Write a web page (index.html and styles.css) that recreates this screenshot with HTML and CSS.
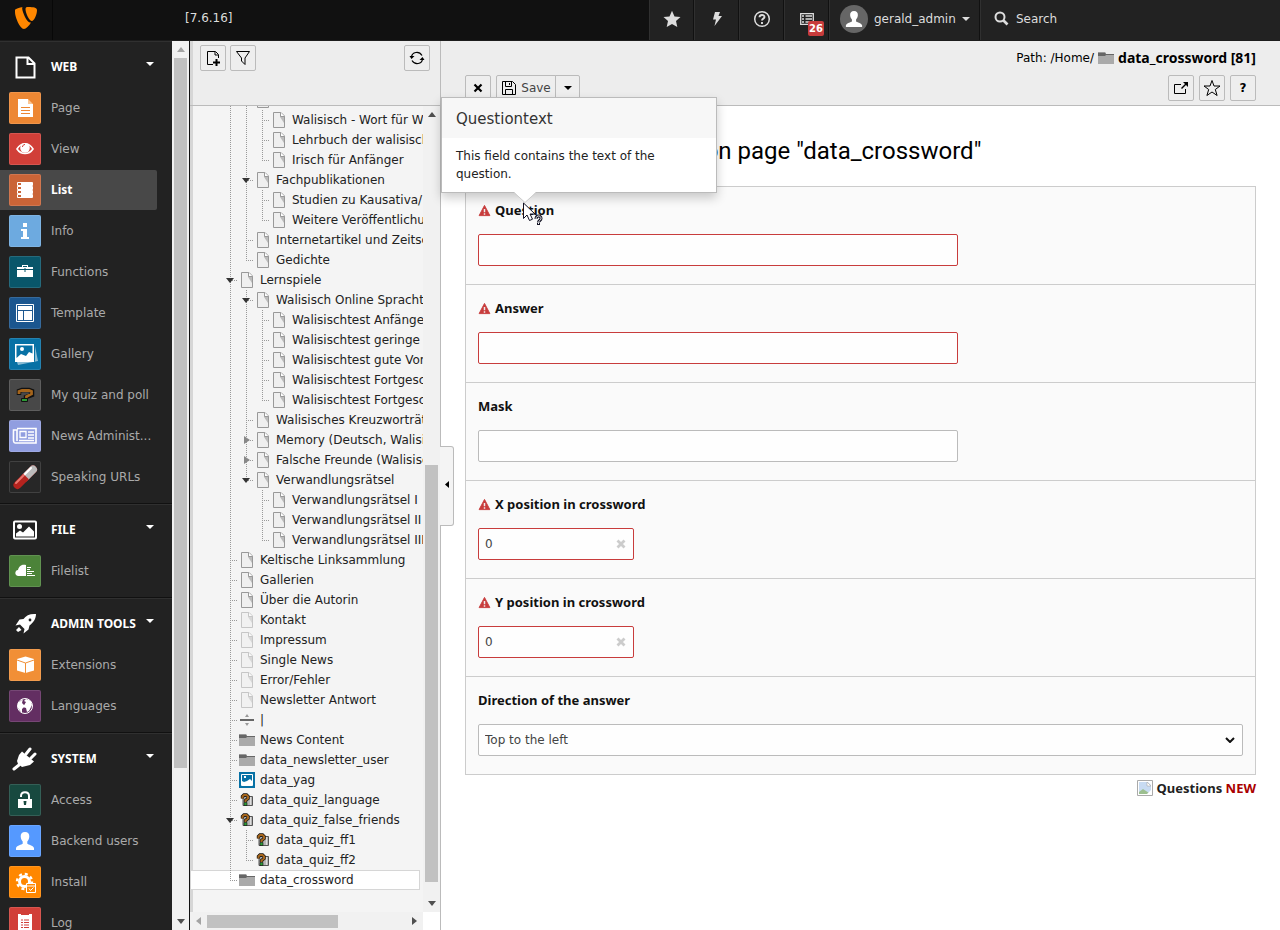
FILE: index.html
```html
<!DOCTYPE html>
<html lang="en">
<head>
<meta charset="utf-8">
<title>TYPO3 CMS [7.6.16]</title>
<link rel="stylesheet" href="styles.css">
</head>
<body>
<svg class="defs" aria-hidden="true">
  <symbol id="page" viewBox="0 0 16 16"><path d="M2.500.5h7.500l3.500 3.500v11.500h-11z" fill="#efefef" stroke="#999"/><path d="M9 4v1l4 6V5z" fill="#bbb"/><path d="M9.500.500v4h4" fill="#fff" stroke="#999"/></symbol>
  <symbol id="folder" viewBox="0 0 16 16"><path d="M0 3h7v1h9v10H0z" fill="#aaa"/><path d="M0 2h7l1 2h8v1H8L7 6H0z" fill="#666"/><path d="M0 2h7v1H0z" fill="#999"/></symbol>
  <symbol id="quiz" viewBox="0 0 16 16"><path d="M4 4.500h9.500v9H4z" fill="#b5b5b5" stroke="#555"/><path d="M11.500 5v8" stroke="#ddd"/><path d="M3.500 6.500V4.500l1.500-1.500h2.500L9 4.500v2L6.500 8.500V10" fill="none" stroke="#111" stroke-width="3.400"/><path d="M3.500 6.500V4.500l1.500-1.500h2.500L9 4.500v2L6.500 8.500V10" fill="none" stroke="#a5651c" stroke-width="2"/><path d="M5 10.500h3v3H5z" fill="#2b9a35" stroke="#111" stroke-width=".6"/></symbol>
  <symbol id="warn" viewBox="0 0 14 14"><path d="M7 1.500l5.800 11H1.200z" fill="#c83c3c" stroke="#c83c3c" stroke-linejoin="round"/><path d="M6.200 5.500h1.600v3.500H6.200zm0 4.500h1.600v1.500H6.200z" fill="#eee"/></symbol>
  <symbol id="user" viewBox="0 0 20 20"><path d="M10 1c3 0 4.500 2 4.300 4.800-.2 2.500-1.300 4-2 4.700v2.200c1 1 5.700 1.300 6.700 4.300V19H1v-2c1-3 5.700-3.300 6.700-4.300v-2.200C7 9.800 5.900 8.300 5.700 5.800 5.500 3 7 1 10 1z" fill="#fff"/></symbol>
  <symbol id="caret" viewBox="0 0 8 4"><path d="M0 0h8L4 4z" fill="currentColor"/></symbol>
</svg>

<header class="topbar">
  <a class="logo" href="#" aria-label="TYPO3"><svg width="22" height="23" viewBox="0 0 22 23"><path d="M16 15.500c-.4.100-.6.100-1 .1C11.800 15.600 7.200 4.700 7.200 1.500 7.200.500 7.500 0 8 0 4 .5 1 1.600 0 2.800-.2 3.200-.1 3.700 0 5c0 5 5 17 9 17 2 0 5-3 7-6.500zM13.700 0c4.300 0 8.300.6 8.300 3 0 5.200-3.300 11-5 11-3 0-6.500-8-6.500-12 0-1.700 1-2 3.200-2z" fill="#ff8700"/></svg></a>
  <span class="version">[7.6.16]</span>
  <nav class="tools">
    <button class="tool" aria-label="Bookmarks"><svg width="18" height="18" viewBox="0 0 18 18"><path d="M9 .8l2.500 5.600 6 .6-4.500 4 1.300 6L9 13.900 3.700 17 5 11 .5 7l6-.6z" fill="#ddd"/></svg></button>
    <button class="tool" aria-label="Clear cache"><svg width="12" height="16" viewBox="0 0 12 16"><path d="M4 1h5L7.500 5H11L3.500 15 5 8.500H2z" fill="#ddd"/></svg></button>
    <button class="tool" aria-label="Help"><svg width="18" height="18" viewBox="0 0 18 18" fill="none" stroke="#ddd"><circle cx="9" cy="9" r="7.300" stroke-width="1.500"/><path d="M6.500 7.300C6.500 4.200 11.500 4.200 11.500 7 11.500 8.700 9 8.600 9 10.500M9 12v2" stroke-width="1.900"/></svg></button>
    <button class="tool" aria-label="System information"><svg width="16" height="14" viewBox="0 0 16 14"><path d="M1.700 1.700h12.600v10.600H1.700z" fill="none" stroke="#ddd" stroke-width="1.300"/><path d="M3 4h2M6.500 4h6.500M3 7h2M6.500 7h6.500M3 10h2M6.500 10h6.500" stroke="#ddd" stroke-width="1.400"/></svg><span class="count">26</span></button>
    <button class="tool account"><span class="avatar"><svg width="18" height="18"><use href="#user"/></svg></span>gerald_admin<svg class="down" width="8" height="4"><use href="#caret"/></svg></button>
    <button class="tool search"><svg width="15" height="15" viewBox="0 0 15 15" fill="none" stroke="#ddd"><circle cx="6" cy="6" r="4.500" stroke-width="2"/><path d="M9.500 9.500l4 4" stroke-width="2.600"/></svg>Search</button>
  </nav>
</header>

<main class="workspace">
  <nav class="modules">
    <div class="modlist">
      <section class="group">
        <button class="head"><svg width="32" height="32" viewBox="0 0 32 32"><path d="M7.500 6.500h12l6 6v14h-18zM18.500 7v6h6" fill="none" stroke="#fff" stroke-width="2"/></svg>WEB<svg class="down" width="8" height="4"><use href="#caret"/></svg></button>
        <a class="mod" href="#"><span class="tile orange"><svg viewBox="0 0 32 32"><path d="M9 7h10v5h5v13H9z" fill="#fff"/><path d="M19 7l5 5h-5z" fill="#fbc693"/><path d="M12 15.500h9M12 18.500h9M12 21.500h9" stroke="#ed8733"/></svg></span>Page</a>
        <a class="mod" href="#"><span class="tile red"><svg viewBox="0 0 32 32"><path d="M8 16c4-7 12-7 16 0-4 6-12 6-16 0z" fill="none" stroke="#fff" stroke-width="1.600"/><circle cx="16" cy="15" r="4.800" fill="#fff"/><path d="M13.500 14c0-1.500 1-2.500 2.500-2.500" fill="none" stroke="#d13f38"/></svg></span>View</a>
        <a class="mod active" href="#"><span class="tile rust"><svg viewBox="0 0 32 32" fill="none" stroke="#fff"><path d="M8.500 8.500h15v3h-15zM8.500 12.500h15v3h-15zM8.500 16.500h15v3h-15zM8.500 20.500h15v3h-15z"/><path d="M12 10h11M12 14h11M12 18h11M12 22h11" stroke-width="2"/></svg></span>List</a>
        <a class="mod" href="#"><span class="tile sky"><svg viewBox="0 0 32 32"><path d="M14 8h4v4h-4zM12 14h6v8h2v2h-8v-2h2v-6h-2z" fill="#fff"/></svg></span>Info</a>
        <a class="mod" href="#"><span class="tile teal"><svg viewBox="0 0 32 32"><path d="M8 11h5V9h6v2h5v10H8z" fill="#fff"/><path d="M14 10.500h4M8 13.500h16M16 12v4" stroke="#09566a"/></svg></span>Functions</a>
        <a class="mod" href="#"><span class="tile blue"><svg viewBox="0 0 32 32"><path d="M7.500 7.500h17v17h-17z" fill="none" stroke="#fff"/><path d="M9 9h14v4H9zM9 14h5v9H9zM15 14h8v9h-8z" fill="#fff"/></svg></span>Template</a>
        <a class="mod" href="#"><span class="tile azure"><svg viewBox="0 0 32 32"><path d="M26 8l3 15-20 4-1-3h18z" fill="#8bbdd5"/><path d="M6 6h19v18H6z" fill="#fff"/><path d="M7.500 7.500h16v8L20 14l-3 4-5-2-4.500 4z" fill="#0771a5"/><circle cx="13" cy="11" r="2" fill="#fff"/></svg></span>Gallery</a>
        <a class="mod" href="#"><span class="tile grey"><svg viewBox="0 0 32 32"><path d="M10 16v-4l3-1h7l3 1v4l-6 2v2" fill="none" stroke="#111" stroke-width="4.500"/><path d="M10 15v-2.500l3-1h7l2.500 1v2.500l-5 2.500v1.500" fill="none" stroke="#a5651c" stroke-width="2.800"/><path d="M12.500 19.500h6v3h-6z" fill="#2b9a35" stroke="#111"/></svg></span>My quiz and poll</a>
        <a class="mod" href="#"><span class="tile lilac"><svg viewBox="0 0 32 32" fill="none" stroke="#fff"><path d="M8 8.500h19v14.500H6C4 23 4.500 20 4.500 10H8v11" stroke-width="1.600"/><path d="M11 11.500h6v6h-6zM19 12h6M19 15h6M19 18h6M10 20.500h15" stroke-width="1.300"/></svg></span>News Administ...</a>
        <a class="mod" href="#"><span class="tile dark"><svg viewBox="0 0 32 32"><path d="M8.500 24L24 8.500" stroke="#b5231e" stroke-width="8" stroke-linecap="round"/><path d="M17 15.500l7-7" stroke="#bbb" stroke-width="8" stroke-linecap="round"/><path d="M14 18.500l3-3" stroke="#b5231e" stroke-width="8"/><path d="M7 22l8-8" stroke="#ea7770" stroke-width="2" stroke-linecap="round"/><path d="M16 13l6-6" stroke="#fff" stroke-width="2" stroke-linecap="round"/></svg></span>Speaking URLs</a>
      </section>
      <section class="group">
        <button class="head"><svg width="32" height="32" viewBox="0 0 32 32"><rect x="5" y="7.500" width="22" height="17" rx="1" fill="none" stroke="#fff" stroke-width="2"/><circle cx="10.500" cy="12.500" r="2.500" fill="#fff"/><path d="M7 22.500v-3l4-3 3 2 6-6 5 5v5z" fill="#fff"/></svg>FILE<svg class="down" width="8" height="4"><use href="#caret"/></svg></button>
        <a class="mod" href="#"><span class="tile green"><svg viewBox="0 0 32 32"><path d="M17 21H9c-4-1-3-6 0-6 1-5 5-6 8-5z" fill="#fff"/><path d="M18 12.500h4M18 14.500h3M18 16.500h7M18 18.500h5M18 20.500h8" stroke="#fff"/></svg></span>Filelist</a>
      </section>
      <section class="group">
        <button class="head"><svg width="32" height="32" viewBox="0 0 32 32"><path d="M27 6c-6-.5-10 1.500-12.500 5l-4 .5-4 6 4.500-1 4.500 4.500-1 4.500 5-4 1-4C24 15 27 11 27 6zM7 22l3-3 2.500 3L9 24z" fill="#fff"/><circle cx="21" cy="12" r="1.400" fill="#222"/></svg>ADMIN TOOLS<svg class="down" width="8" height="4"><use href="#caret"/></svg></button>
        <a class="mod" href="#"><span class="tile amber"><svg viewBox="0 0 32 32"><path d="M8 10l8.500-2.500L25 10v11.500L16.500 24 8 21.500z" fill="#fff"/><path d="M8 11l8.500 3L25 11M16.500 14v10" fill="none" stroke="#f18f36"/></svg></span>Extensions</a>
        <a class="mod" href="#"><span class="tile purple"><svg viewBox="0 0 32 32"><circle cx="16" cy="16" r="7.500" fill="none" stroke="#fff"/><path d="M9 13l5-4-1 4 3 3-3 3v4l-4-5zM17 9l5 2 1 4-3 6-2 1-1-4-3-1 3-5-2-1z" fill="#fff"/></svg></span>Languages</a>
      </section>
      <section class="group">
        <button class="head"><svg width="32" height="32" viewBox="0 0 32 32"><path d="M5 26l5-4M17 11l4-5M22 15l4-4" stroke="#fff" stroke-width="3" stroke-linecap="round"/><path d="M13 8.500l12 10-4 3.500-8 2-4-3-1-3 2-6z" fill="#fff"/></svg>SYSTEM<svg class="down" width="8" height="4"><use href="#caret"/></svg></button>
        <a class="mod" href="#"><span class="tile forest"><svg viewBox="0 0 32 32"><path d="M9 15h14v9H9z" fill="#fff"/><path d="M12 13v-1c0-5 8-5 8 0v3" fill="none" stroke="#fff" stroke-width="2"/><path d="M14.500 17h3l-.5 4h-2z" fill="#18493f"/></svg></span>Access</a>
        <a class="mod" href="#"><span class="tile bright"><svg viewBox="-6 -6 32 32"><use href="#user" width="20" height="20"/></svg></span>Backend users</a>
        <a class="mod" href="#"><span class="tile vivid"><svg viewBox="0 0 32 32"><circle cx="15.500" cy="15.500" r="5" fill="none" stroke="#fff" stroke-width="3"/><circle cx="15.500" cy="15.500" r="7.500" fill="none" stroke="#fff" stroke-width="2.400" stroke-dasharray="3 2.900"/><path d="M17.500 17.500h9v9h-9z" fill="#ff8700" stroke="#fff"/><path d="M18 20h8M20 22.500l1.500 2 3-3" fill="none" stroke="#fff"/></svg></span>Install</a>
        <a class="mod" href="#"><span class="tile red"><svg viewBox="0 0 32 32"><path d="M9 7h14v18H9z" fill="#fff"/><path d="M12 7.500h8M12 13h2M15 13h5M12 15.500h2M15 15.500h5M12 18h2M15 18h5M12 20.500h2M15 20.500h5" stroke="#d13f38"/></svg></span>Log</a>
      </section>
    </div>
    <div class="vbar modbar"><svg class="arr" width="8" height="5" viewBox="0 0 8 5"><path d="M0 5h8L4 0z" fill="#a3a3a3"/></svg><div class="track"><div class="thumb"></div></div><svg class="arr" width="8" height="5" viewBox="0 0 8 5"><path d="M0 0h8L4 5z" fill="#505050"/></svg></div>
  </nav>

  <aside class="pages">
    <div class="dochead treehead">
      <button class="btn" aria-label="New page"><svg width="18" height="18" viewBox="0 0 18 18"><path d="M9 15.500H3.500v-13h8l3 3V9M11 3v3h3" fill="none" stroke="#000"/><path d="M12.500 10v7M9 13.500h7" stroke="#000" stroke-width="2"/></svg></button>
      <button class="btn" aria-label="Filter"><svg width="18" height="18" viewBox="0 0 18 18"><path d="M2.500 2.500h13L11 9v6.500L7.500 12V9z" fill="none" stroke="#000"/></svg></button>
      <button class="btn end" aria-label="Refresh"><svg width="18" height="18" viewBox="0 0 18 18" fill="none" stroke="#000" stroke-width="1.200"><path d="M3.500 8C4 3 11 1.500 14 6.500M14.500 10C14 15 7 16.500 4 11.500"/><path d="M1.500 7h5l-3 3zM16.500 11h-5l3-3z" fill="#000" stroke="none"/></svg></button>
    </div>
    <div class="treewrap">
      <ul class="tree">
        <li><i class="v"></i><i class="v"></i><svg class="ic"><use href="#page"/></svg></li>
        <li><i class="v"></i><i class="v"></i><i class="t"></i><svg class="ic"><use href="#page"/></svg><a href="#">Walisisch - Wort für Wort</a></li>
        <li><i class="v"></i><i class="v"></i><i class="t"></i><svg class="ic"><use href="#page"/></svg><a href="#">Lehrbuch der walisischen</a></li>
        <li><i class="v"></i><i class="v"></i><i class="l"></i><svg class="ic"><use href="#page"/></svg><a href="#">Irisch für Anfänger</a></li>
        <li><i class="v"></i><i class="t open"></i><svg class="ic"><use href="#page"/></svg><a href="#">Fachpublikationen</a></li>
        <li><i class="v"></i><i class="v"></i><i class="t"></i><svg class="ic"><use href="#page"/></svg><a href="#">Studien zu Kausativa/</a></li>
        <li><i class="v"></i><i class="v"></i><i class="l"></i><svg class="ic"><use href="#page"/></svg><a href="#">Weitere Veröffentlichungen</a></li>
        <li><i class="v"></i><i class="t"></i><svg class="ic"><use href="#page"/></svg><a href="#">Internetartikel und Zeitschriften</a></li>
        <li><i class="v"></i><i class="l"></i><svg class="ic"><use href="#page"/></svg><a href="#">Gedichte</a></li>
        <li><i class="t open"></i><svg class="ic"><use href="#page"/></svg><a href="#">Lernspiele</a></li>
        <li><i class="v"></i><i class="t open"></i><svg class="ic"><use href="#page"/></svg><a href="#">Walisisch Online Sprachtest</a></li>
        <li><i class="v"></i><i class="v"></i><i class="t"></i><svg class="ic"><use href="#page"/></svg><a href="#">Walisischtest Anfänger</a></li>
        <li><i class="v"></i><i class="v"></i><i class="t"></i><svg class="ic"><use href="#page"/></svg><a href="#">Walisischtest geringe Vorkenntnisse</a></li>
        <li><i class="v"></i><i class="v"></i><i class="t"></i><svg class="ic"><use href="#page"/></svg><a href="#">Walisischtest gute Vorkenntnisse</a></li>
        <li><i class="v"></i><i class="v"></i><i class="t"></i><svg class="ic"><use href="#page"/></svg><a href="#">Walisischtest Fortgeschrittene</a></li>
        <li><i class="v"></i><i class="v"></i><i class="l"></i><svg class="ic"><use href="#page"/></svg><a href="#">Walisischtest Fortgeschrittene</a></li>
        <li><i class="v"></i><i class="t"></i><svg class="ic"><use href="#page"/></svg><a href="#">Walisisches Kreuzworträtsel</a></li>
        <li><i class="v"></i><i class="t shut"></i><svg class="ic"><use href="#page"/></svg><a href="#">Memory (Deutsch, Walisisch)</a></li>
        <li><i class="v"></i><i class="t shut"></i><svg class="ic"><use href="#page"/></svg><a href="#">Falsche Freunde (Walisisch)</a></li>
        <li><i class="v"></i><i class="l open"></i><svg class="ic"><use href="#page"/></svg><a href="#">Verwandlungsrätsel</a></li>
        <li><i class="v"></i><i></i><i class="t"></i><svg class="ic"><use href="#page"/></svg><a href="#">Verwandlungsrätsel I</a></li>
        <li><i class="v"></i><i></i><i class="t"></i><svg class="ic"><use href="#page"/></svg><a href="#">Verwandlungsrätsel II</a></li>
        <li><i class="v"></i><i></i><i class="l"></i><svg class="ic"><use href="#page"/></svg><a href="#">Verwandlungsrätsel III</a></li>
        <li><i class="t"></i><svg class="ic"><use href="#page"/></svg><a href="#">Keltische Linksammlung</a></li>
        <li><i class="t"></i><svg class="ic"><use href="#page"/></svg><a href="#">Gallerien</a></li>
        <li><i class="t"></i><svg class="ic"><use href="#page"/></svg><a href="#">Über die Autorin</a></li>
        <li><i class="t"></i><svg class="ic faint"><use href="#page"/></svg><a href="#">Kontakt</a></li>
        <li><i class="t"></i><svg class="ic faint"><use href="#page"/></svg><a href="#">Impressum</a></li>
        <li><i class="t"></i><svg class="ic faint"><use href="#page"/></svg><a href="#">Single News</a></li>
        <li><i class="t"></i><svg class="ic faint"><use href="#page"/></svg><a href="#">Error/Fehler</a></li>
        <li><i class="t"></i><svg class="ic faint"><use href="#page"/></svg><a href="#">Newsletter Antwort</a></li>
        <li><i class="t"></i><svg class="ic" viewBox="0 0 16 16"><path d="M1 7h14v2H1z" fill="#666"/><path d="M6 5h4L8 2zM6 11h4l-2 3z" fill="#999"/></svg><a href="#">|</a></li>
        <li><i class="t"></i><svg class="ic"><use href="#folder"/></svg><a href="#">News Content</a></li>
        <li><i class="t"></i><svg class="ic"><use href="#folder"/></svg><a href="#">data_newsletter_user</a></li>
        <li><i class="t"></i><svg class="ic" viewBox="0 0 16 16"><path d="M0 0h16v16H0z" fill="#0771a5"/><path d="M2.500 2.500h11v11h-11z" fill="none" stroke="#fff"/><path d="M3 13V9l2 1 3-1 3-2 2 2v4zM5 4h2v2H5z" fill="#fff"/></svg><a href="#">data_yag</a></li>
        <li><i class="t"></i><svg class="ic"><use href="#quiz"/></svg><a href="#">data_quiz_language</a></li>
        <li><i class="t open"></i><svg class="ic"><use href="#quiz"/></svg><a href="#">data_quiz_false_friends</a></li>
        <li><i class="v"></i><i class="t"></i><svg class="ic"><use href="#quiz"/></svg><a href="#">data_quiz_ff1</a></li>
        <li><i class="v"></i><i class="l"></i><svg class="ic"><use href="#quiz"/></svg><a href="#">data_quiz_ff2</a></li>
        <li class="selected"><i class="l"></i><svg class="ic"><use href="#folder"/></svg><a href="#">data_crossword</a></li>
      </ul>
      <div class="vbar treebar"><svg class="arr" width="8" height="5" viewBox="0 0 8 5"><path d="M0 5h8L4 0z" fill="#505050"/></svg><div class="track"><div class="thumb"></div></div><svg class="arr" width="8" height="5" viewBox="0 0 8 5"><path d="M0 0h8L4 5z" fill="#505050"/></svg></div>
      <div class="hbar"><svg width="5" height="8" viewBox="0 0 5 8"><path d="M5 0v8L0 4z" fill="#a3a3a3"/></svg><div class="track"><div class="thumb"></div></div><svg width="5" height="8" viewBox="0 0 5 8"><path d="M0 0v8l5-4z" fill="#505050"/></svg></div>
    </div>
    <button class="collapse" aria-label="Collapse page tree"><svg width="4" height="7" viewBox="0 0 4 7"><path d="M4 0v7L0 3.500z" fill="#000"/></svg></button>
  </aside>

  <section class="content">
    <div class="dochead">
      <div class="path">Path: /Home/ <svg class="ic"><use href="#folder"/></svg> <strong>data_crossword [81]</strong></div>
      <div class="bar">
        <button class="btn" aria-label="Close"><svg width="10" height="10" viewBox="0 0 10 10"><path d="M1.500 1.500l7 7m0-7l-7 7" stroke="#000" stroke-width="2.200"/></svg></button>
        <div class="split">
          <button class="btn save"><svg width="16" height="16" viewBox="0 0 16 16"><path d="M1.500 1.500h10l3 3v10h-13zM4.500 2v4.500h6V2M4.500 14.500v-5h7v5M8.500 3v2" fill="none" stroke="#000"/></svg>Save</button>
          <button class="btn more" aria-label="More save options"><svg width="8" height="4"><use href="#caret"/></svg></button>
        </div>
        <button class="btn end" aria-label="Open in new window"><svg width="18" height="18" viewBox="0 0 18 18"><path d="M9 5.500H2.500v9h11V10" fill="none" stroke="#000"/><path d="M9.500 9.500L14 5" stroke="#000" stroke-width="1.500"/><path d="M11 3h5v5z"/></svg></button>
        <button class="btn" aria-label="Bookmark"><svg width="18" height="18" viewBox="0 0 18 18"><path d="M9 1.500l2 5.500h6l-4.700 3.500 1.800 6L9 13l-5.100 3.500 1.800-6L1 7h6z" fill="none" stroke="#000"/></svg></button>
        <button class="btn help" aria-label="Help">?</button>
      </div>
    </div>
    <div class="body">
      <h1>Create new Questions on page "data_crossword"</h1>
      <form class="panel">
        <div class="field anchor">
          <label for="question"><svg><use href="#warn"/></svg>Question</label>
          <input id="question" class="text bad" type="text">
          <div class="popover" role="tooltip">
            <h2>Questiontext</h2>
            <p>This field contains the text of the question.</p>
            <svg class="tip" width="22" height="11" viewBox="0 0 22 11"><path d="M0 0l11 10.500L22 0z" fill="#fff" /><path d="M0 .5l11 10L22 .5" fill="none" stroke="#ccc"/></svg>
          </div>
          <svg class="pointer" width="22" height="24" viewBox="0 0 22 24"><path d="M1.500 1v15.500L5 13l2.500 5.500 3-1.300L8 12h5z" fill="#fff" stroke="#112"/><path d="M14 17c0-4 5-4 5-.5 0 2-2.500 2-2.500 4M16.500 21v2" fill="none" stroke="#112" stroke-width="3"/><path d="M14 17c0-4 5-4 5-.5 0 2-2.500 2-2.500 4M16.500 21v1" fill="none" stroke="#fff"/></svg>
        </div>
        <div class="field">
          <label for="answer"><svg><use href="#warn"/></svg>Answer</label>
          <input id="answer" class="text bad" type="text">
        </div>
        <div class="field">
          <label for="mask">Mask</label>
          <input id="mask" class="text" type="text">
        </div>
        <div class="field">
          <label for="xpos"><svg><use href="#warn"/></svg>X position in crossword</label>
          <div class="number"><input id="xpos" class="text bad" type="text" value="0"><button type="button" class="clear" aria-label="Clear"><svg width="10" height="10" viewBox="0 0 10 10"><path d="M1.500 1.500l7 7m0-7l-7 7" stroke="#ccc" stroke-width="2.800"/></svg></button></div>
        </div>
        <div class="field">
          <label for="ypos"><svg><use href="#warn"/></svg>Y position in crossword</label>
          <div class="number"><input id="ypos" class="text bad" type="text" value="0"><button type="button" class="clear" aria-label="Clear"><svg width="10" height="10" viewBox="0 0 10 10"><path d="M1.500 1.500l7 7m0-7l-7 7" stroke="#ccc" stroke-width="2.800"/></svg></button></div>
        </div>
        <div class="field">
          <label for="direction">Direction of the answer</label>
          <div class="choice"><select id="direction" class="text"><option>Top to the left</option></select><svg width="10" height="6" viewBox="0 0 10 6"><path d="M1 1l4 4 4-4" fill="none" stroke="#111" stroke-width="2"/></svg></div>
        </div>
      </form>
      <p class="record"><svg width="16" height="16" viewBox="0 0 16 16"><path d="M.5.5h15v15H.5z" fill="#fff" stroke="#aaa"/><path d="M2 2h9l3 3v9H2z" fill="#c8dbf2"/><path d="M2 14v-2l4-3 6 4v1z" fill="#9cbf90"/><path d="M10 2l4 4h-4z" fill="#fff" stroke="#aaa" stroke-width=".6"/><path d="M15 9l-6 6h6z" fill="#fff"/></svg><strong>Questions <span>NEW</span></strong></p>
    </div>
  </section>
</main>
</body>
</html>
```
FILE: styles.css
```css
* { box-sizing: border-box; }
html, body { height: 100%; }
body {
  margin: 0;
  display: flex;
  flex-direction: column;
  overflow: hidden;
  background: #fff;
  color: #222;
  font: 12px/18px "DejaVu Sans", sans-serif;
}
button, input, select { font: inherit; color: inherit; }
button { margin: 0; padding: 0; border: 0; background: none; }
a { color: inherit; text-decoration: none; }
svg { display: block; flex: none; }
strong, label { font-family: "Noto Sans", sans-serif; font-weight: 700; font-size: 13px; }
.defs { position: absolute; width: 0; height: 0; }

.topbar {
  flex: none;
  height: 41px;
  display: flex;
  align-items: stretch;
  background: #111;
  border-bottom: 1px solid #1c1c1c;
  color: #ddd;
}
.logo { width: 53px; padding: 7px 0 0 15px; border-right: 1px solid #080808; }
.version { flex: 1; padding: 9px 0 0 132px; }
.tools { display: flex; width: 49.3%; }
.tool {
  position: relative;
  width: 45px;
  display: flex;
  align-items: center;
  justify-content: center;
  padding: 0 0 3px 1px;
  background: #222;
  border-left: 1px solid #303030;
  border-right: 1px solid #111;
}
.count {
  position: absolute;
  left: 23px;
  top: 21px;
  width: 16px;
  height: 15px;
  border-radius: 2px;
  background: #c83c3c;
  color: #fff;
  font: bold 10px/15px "DejaVu Sans", sans-serif;
}
.tool.account { width: 151px; gap: 6px; justify-content: flex-start; padding-left: 10px; }
.avatar {
  width: 28px;
  height: 28px;
  border-radius: 50%;
  background: #666;
  display: grid;
  place-items: center;
}
.tool.search { flex: 1; justify-content: flex-start; padding-left: 13px; gap: 7px; border-right: 0; }

.workspace { flex: 1; min-height: 0; display: flex; }
.modules { flex: none; width: 190px; display: flex; background: #222; border-right: 1px solid #111; }
.modlist { flex: 1; overflow: hidden; }
.group { padding: 6px 0 5px; border-bottom: 1px solid #111; box-shadow: inset 0 1px #303030; }
.head, .mod { display: flex; align-items: center; gap: 10px; height: 40px; margin-bottom: 1px; padding-left: 9px; width: 157px; }
.head { color: #fff; font: bold 12px/18px "Noto Sans", sans-serif; padding-right: 3px; }
.head .down { margin: 0 0 6px auto; }
.mod { color: #aaa; white-space: nowrap; }
.mod.active { background: #484848; color: #fff; border-radius: 0 2px 2px 0; font-weight: 700; font-family: "Noto Sans", sans-serif; }
.tile { flex: none; width: 32px; height: 32px; border-radius: 2px; box-shadow: inset 0 0 0 1px rgba(255, 255, 255, .12); }
.orange { background: #ed8733; }
.red { background: #d13f38; }
.rust { background: #ca6437; }
.sky { background: #6daae0; }
.teal { background: #09566a; }
.blue { background: #1b568f; }
.azure { background: #0771a5; }
.grey { background: #484848; }
.lilac { background: #919ee0; }
.dark { background: #272727; }
.green { background: #4c8339; }
.amber { background: #f18f36; }
.purple { background: #632e62; }
.forest { background: #18493f; }
.bright { background: #5599ff; }
.vivid { background: #ff8700; }

.vbar { flex: none; width: 17px; background: #f1f1f1; display: flex; flex-direction: column; align-items: center; }
.vbar .arr { margin: 6px 0; }
.vbar .track { flex: 1; width: 13px; }
.thumb { background: #c1c1c1; }
.modbar .thumb { height: 83%; }
.treebar .track { display: flex; flex-direction: column; justify-content: flex-end; padding-bottom: 13px; }
.treebar .thumb { height: 55%; }

.pages {
  position: relative;
  flex: none;
  width: 251px;
  display: flex;
  flex-direction: column;
  background: #f4f4f4;
  border-right: 1px solid #bbb;
  box-shadow: inset 3px 0 #d6d6d6;
}
.dochead { flex: none; height: 65px; background: #ededed; border-bottom: 1px solid #bbb; color: #000; }
.treehead { display: flex; gap: 4px; padding: 4px 10px; box-shadow: inset 3px 0 #d6d6d6; }
.btn {
  display: flex;
  align-items: center;
  justify-content: center;
  width: 26px;
  height: 26px;
  border: 1px solid #bbb;
  border-radius: 2px;
  background: #eee;
}
.end { margin-left: auto; }
.treewrap {
  flex: 1;
  min-height: 0;
  display: grid;
  grid-template: minmax(0, 1fr) 18px / minmax(0, 1fr) 17px;
  background: linear-gradient(#fff, #fff) right bottom / 17px 18px no-repeat;
}
.tree { margin: 0; padding: 0; list-style: none; overflow: hidden; }
.tree li { display: flex; align-items: center; height: 20px; padding-left: 32px; white-space: nowrap; }
.tree li:first-child { margin-top: -16px; }
.tree .selected { width: 230px; background: #fff; box-shadow: inset 0 0 0 1px #d6d6d6; }
.ic { width: 16px; height: 16px; margin: 0 5px 0 1px; }
.faint { opacity: .5; }
.tree i {
  position: relative;
  flex: none;
  width: 16px;
  height: 20px;
}
.v, .t, .l {
  --down: repeating-linear-gradient(#999 0 1px, transparent 1px 2px);
  --across: repeating-linear-gradient(90deg, #999 0 1px, transparent 1px 2px);
}
.v { background: var(--down) 8px 0 / 1px 20px no-repeat; }
.t { background: var(--down) 8px 0 / 1px 20px no-repeat, var(--across) 8px 10px / 8px 1px no-repeat; }
.l { background: var(--down) 8px 0 / 1px 10px no-repeat, var(--across) 8px 10px / 8px 1px no-repeat; }
.open::after, .shut::after { content: ""; position: absolute; border: 4px solid transparent; }
.open::after { left: 4px; top: 8px; border-top: 5px solid #333; border-bottom: 0; }
.shut::after { left: 6px; top: 6px; border-left: 6px solid #888; border-right: 0; }
.hbar { display: flex; align-items: center; padding: 0 6px; gap: 6px; background: #f1f1f1; }
.hbar .track { flex: 1; }
.hbar .thumb { width: 66%; height: 13px; }
.collapse {
  position: absolute;
  left: 100%;
  top: 405px;
  width: 14px;
  height: 80px;
  display: grid;
  place-items: center;
  padding-bottom: 3px;
  background: #f4f4f4;
  border: 1px solid #bbb;
  border-left: 0;
  border-radius: 0 3px 3px 0;
}

.content { flex: 1; min-width: 0; }
.content .dochead { padding: 8px 24px 0; }
.path { display: flex; justify-content: flex-end; align-items: center; height: 18px; margin-bottom: 8px; }
.path .ic { margin: 0 4px; }
.path strong { font-size: 14px; }
.bar { display: flex; gap: 5px; }
.split { display: flex; }
.save { width: 60px; gap: 4px; border-radius: 2px 0 0 2px; color: #444; }
.more { width: 25px; margin-left: -1px; border-radius: 0 2px 2px 0; }
.help { font-weight: 700; }
.body { padding: 30px 24px; }
h1 { margin: 0 0 20px; font: 24px/30px Roboto, sans-serif; color: #000; white-space: nowrap; }
.panel { background: #fafafa; border: 1px solid #ccc; }
.field { height: 98px; padding: 14px 12px; border-bottom: 1px solid #ccc; }
.field:last-child { height: 97px; border-bottom: 0; }
label { display: flex; align-items: center; gap: 4px; height: 18px; margin-bottom: 15px; color: #111; }
label svg { width: 13px; height: 13px; }
.text {
  display: block;
  width: 480px;
  max-width: 100%;
  height: 32px;
  padding: 0 6px;
  border: 1px solid #bbb;
  border-radius: 2px;
  background: #fefefe;
  color: #444;
}
.bad { border-color: #c83c3c; }
.number { position: relative; width: 156px; }
.number .text, .choice .text { width: 100%; }
.clear { position: absolute; right: 8px; top: 11px; }
.choice { position: relative; }
.choice select { appearance: none; }
.choice svg { position: absolute; right: 8px; top: 13px; pointer-events: none; }
.anchor { position: relative; }
.popover {
  position: absolute;
  left: -25px;
  bottom: 91px;
  width: 276px;
  background: #fff;
  border: 1px solid #bbb;
  box-shadow: 0 5px 10px rgba(0, 0, 0, .2);
}
.popover h2 { margin: 0; padding: 12px 14px 10px; font: 15px/18px "DejaVu Sans", sans-serif; background: #f7f7f7; color: #333; }
.popover p { margin: 0; padding: 9px 14px; }
.tip { position: absolute; left: 72px; top: 100%; }
.pointer { position: absolute; left: 56px; top: 15px; }
.record { display: flex; justify-content: flex-end; align-items: center; gap: 4px; margin: 4px 0 0; }
.record span { color: #a00; }
```
